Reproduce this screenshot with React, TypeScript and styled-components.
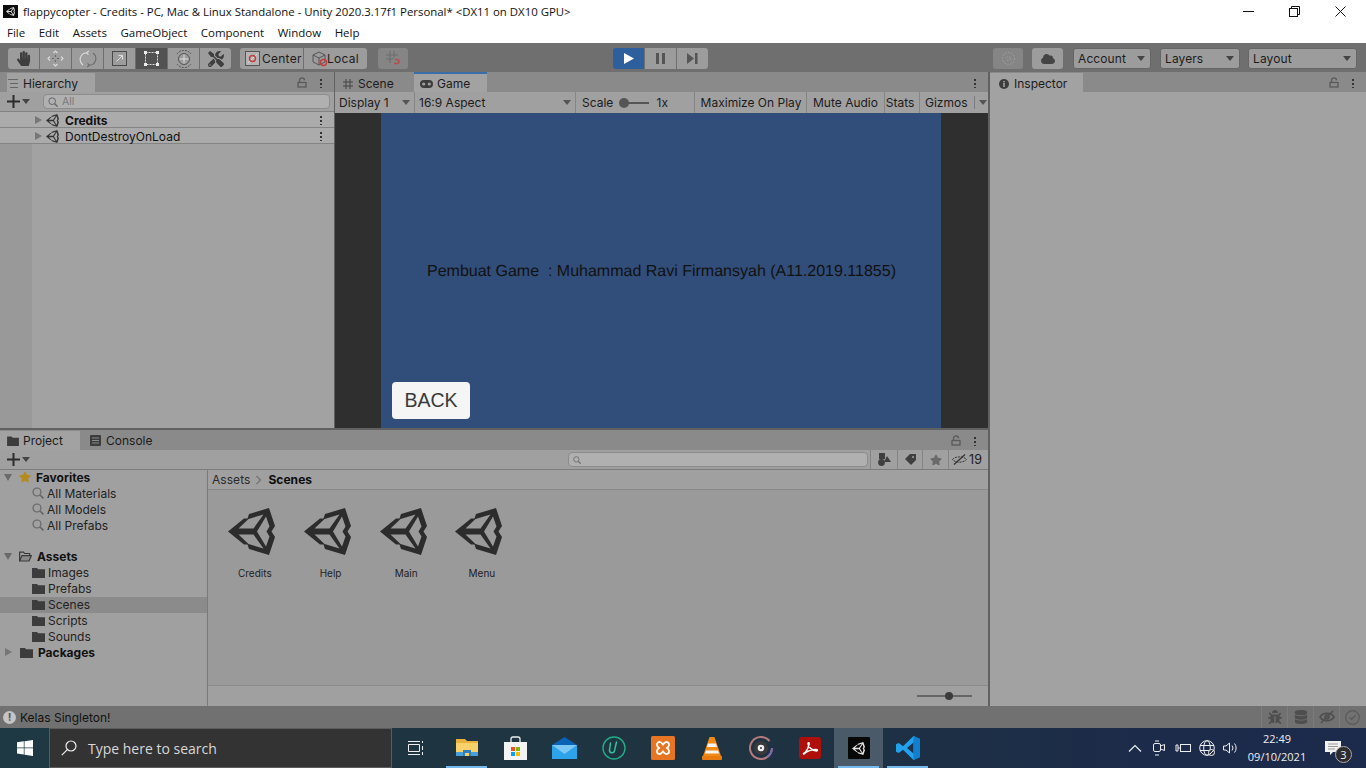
import React from "react";
import styled, { createGlobalStyle } from "styled-components";
import { FaHandPaper, FaTools, FaStar, FaCloud, FaBug, FaDatabase } from "react-icons/fa";

const Global = createGlobalStyle`
  html, body { margin: 0; padding: 0; width: 1366px; height: 768px; overflow: hidden; background: #fff; }
  * { box-sizing: border-box; }
`;

const Shell = styled.div`
  width: 1366px; height: 768px; display: flex; flex-direction: column;
  font-family: Inter, "Liberation Sans", sans-serif; font-size: 12px; color: #111; white-space: nowrap;
`;

/* window chrome */
const TitleBar = styled.div`
  height: 22px; display: flex; align-items: center; background: #fff; padding-left: 3px;
  font-family: "Open Sans", sans-serif; font-size: 11.4px; color: #111;
`;
const AppIcon = styled.div`
  width: 15px; height: 13px; background: #0c0c0c; color: #ddd; display: flex; align-items: center; justify-content: center; margin-right: 5px;
`;
const WinControls = styled.div`margin-left: auto; display: flex; padding-right: 3px;`;
const WinControl = styled.div`width: 46px; height: 22px; display: flex; align-items: center; justify-content: center;`;
const MenuBar = styled.div`
  height: 21px; display: flex; align-items: center; gap: 13.5px; padding-left: 7px; background: #fff;
  font-family: "Open Sans", sans-serif; font-size: 11.5px; color: #111;
`;

/* main toolbar */
const Toolbar = styled.div`height: 29px; background: #6f6f6f; display: flex; align-items: center; padding-top: 2px;`;
const ToolGroup = styled.div<{ $ml: number }>`
  display: flex; gap: 1px; margin-left: ${(p) => p.$ml}px; height: 21px; border-radius: 3px; overflow: hidden; flex: none;
`;
const ToolBtn = styled.div<{ $w?: number; $bg?: string }>`
  width: ${(p) => p.$w ?? 31}px; height: 21px; background: ${(p) => p.$bg ?? "#9c9c9c"};
  display: flex; align-items: center; justify-content: center; color: #1c1c1c;
`;
const PivotBtn = styled(ToolBtn)<{ $pl: number }>`
  justify-content: flex-start; padding-left: ${(p) => p.$pl}px; gap: 2px; font-size: 12px; letter-spacing: .25px;
`;
const Drop = styled.div<{ $ml: number; $w: number }>`
  margin-left: ${(p) => p.$ml}px; width: ${(p) => p.$w}px; height: 21px; background: #9c9c9c; border-radius: 3px; border: 1px solid #666; flex: none;
  display: flex; align-items: center; justify-content: space-between; padding: 0 5px 0 4px; font-size: 12px; letter-spacing: .1px; color: #1c1c1c;
`;
const Caret = styled.span<{ $c?: string }>`
  width: 0; height: 0; border-left: 4px solid transparent; border-right: 4px solid transparent; border-top: 5px solid ${(p) => p.$c ?? "#444"};
  flex: none;
`;

/* dock */
const Dock = styled.div`flex: 1; display: flex; gap: 2px; background: #616161; min-height: 0;`;
const LeftCol = styled.div`width: 988px; display: flex; flex-direction: column; gap: 2px; flex: none;`;
const TopRow = styled.div`height: 356px; display: flex; gap: 1px; flex: none;`;
const Panel = styled.div<{ $w?: number }>`
  ${(p) => (p.$w ? `width: ${p.$w}px;` : "flex: 1;")} display: flex; flex-direction: column; background: #a2a2a2; min-width: 0;
`;
const Strip = styled.div`height: 20px; flex: none; background: #8a8a8a; display: flex; align-items: flex-end;`;
const Tab = styled.div<{ $w: number; $ml?: number; $on?: boolean; $pl?: number; $gap?: number }>`
  width: ${(p) => p.$w}px; margin-left: ${(p) => p.$ml ?? 0}px; height: 19px; flex: none;
  background: ${(p) => (p.$on ? "#a2a2a2" : "#8a8a8a")}; display: flex; align-items: center; gap: ${(p) => p.$gap ?? 5}px; padding-left: ${(p) => p.$pl ?? 7}px;
  font-size: 12px; color: #1c1c1c;
`;
const TopTab = styled(Tab)`padding-top: 2px;`;
const ActiveTab = styled(Tab)`height: 20px; border-top: 2px solid #3a6ea8; padding-top: 1px;`;
const StripEnd = styled.div`margin-left: auto; height: 19px; display: flex; align-items: center; gap: 13px; color: #444; padding-right: 12px;`;
const Kebab = styled.div`
  width: 2px; height: 10px; flex: none;
  background: radial-gradient(circle, #333 1px, transparent 1.1px) 0 0 / 2px 4px repeat-y;
`;
const SubBar = styled.div`
  height: 20px; flex: none; background: #a0a0a0; border-bottom: 1px solid #828282; display: flex; align-items: center;
`;
const PlusBtn = styled.div`width: 34px; padding-left: 7px; display: flex; align-items: center; gap: 2px; flex: none;`;
const SearchField = styled.div<{ $ml?: number; $w: number }>`
  height: 15px; background: #b0b0b0; border: 1px solid #8c8c8c; border-radius: 4px; display: flex; align-items: center; gap: 4px; padding-left: 4px; flex: none;
  color: #7a7a7a; font-size: 10.5px; margin-left: ${(p) => p.$ml ?? 0}px; width: ${(p) => p.$w}px;
`;

/* hierarchy */
const HierBody = styled.div`flex: 1; display: flex; flex-direction: column;
  background: linear-gradient(90deg, #999 32px, #a2a2a2 32px);`;
const SceneRow = styled.div<{ $bold?: boolean }>`
  height: 16px; flex: none; background: #ababab; border-bottom: 1px solid #848484; display: flex; align-items: center; padding: 1px 12px 0 35px;
  font-size: 12px; font-weight: ${(p) => (p.$bold ? 700 : 400)}; color: #111; gap: 4px;
`;
const RowEnd = styled.span`margin-left: auto; display: flex;`;
const SceneLogo = styled.span`margin-right: 2px; color: #333; display: flex;`;
const RightTri = styled.span`
  width: 0; height: 0; border-top: 4px solid transparent; border-bottom: 4px solid transparent; border-left: 7px solid #767676; flex: none;
`;
const DownTri = styled.span`
  width: 0; height: 0; border-left: 4.5px solid transparent; border-right: 4.5px solid transparent; border-top: 7px solid #6a6a6a; flex: none;
`;

/* game */
const GameBar = styled(SubBar)`border-bottom: 0; height: 21px; font-size: 12px; color: #1c1c1c;`;
const GameCell = styled.div<{ $w: number; $end?: boolean }>`
  width: ${(p) => p.$w}px; height: 100%; display: flex; align-items: center; padding: 0 4px; flex: none;
  justify-content: space-between; border-right: ${(p) => (p.$end ? "0" : "1px solid #858585")};
`;
const CenterCell = styled(GameCell)<{ $shift: number }>`
  justify-content: center; padding: 0 ${(p) => (p.$shift < 0 ? -p.$shift : 0)}px 0 ${(p) => (p.$shift > 0 ? p.$shift : 0)}px;
`;
const ScaleCell = styled(GameCell)`padding: 0 26px 0 6px;`;
const GizmoCell = styled(GameCell)`justify-content: flex-start; padding: 0 0 0 5px;`;
const GizSep = styled.span`width: 1px; height: 13px; background: #7d7d7d; margin: 0 4px 0 6px; flex: none;`;
const ScaleTrack = styled.span`width: 30px; height: 10px; position: relative; display: inline-block; margin-left: 6px; vertical-align: -1px;
  &::before { content: ""; position: absolute; left: 3px; right: 0; top: 4px; height: 2px; background: #555; }
  &::after { content: ""; position: absolute; left: 0; top: 0; width: 10px; height: 10px; border-radius: 50%; background: #555; }
`;
const GameView = styled.div`flex: 1; background: #2f2f2f; display: flex; justify-content: center; min-height: 0;`;
const Screen = styled.div`
  width: 560px; margin-right: 1px; background: #314d79; display: flex; flex-direction: column; padding: 150px 0 9px 11px;
  font-family: "Liberation Sans", Arial, sans-serif;
`;
const Credit = styled.div`font-size: 16px; color: #111; margin-left: 35px; white-space: pre; height: 18px; line-height: 18px; text-rendering: geometricPrecision;`;
const BackBtn = styled.div`
  margin-top: auto; width: 78px; height: 37px; background: #f5f5f5; border-radius: 4px; color: #3a3a3a; font-size: 19.5px;
  display: flex; align-items: center; justify-content: center;
`;

/* project */
const BottomRow = styled.div`flex: 1; display: flex; flex-direction: column; background: #a2a2a2; min-height: 0;`;
const ProjectBar = styled(SubBar)`border-bottom: 1px solid #7c7c7c;`;
const FilterCell = styled.div<{ $w: number; $ml?: number }>`
  width: ${(p) => p.$w}px; margin-left: ${(p) => p.$ml ?? 0}px; height: 100%; display: flex; align-items: center; justify-content: center; gap: 2px; border-left: 1px solid #858585; flex: none; color: #1c1c1c; font-size: 12.5px;
`;
const Browser = styled.div`flex: 1; display: flex; min-height: 0;`;
const Tree = styled.div`width: 208px; border-right: 1px solid #7a7a7a; flex: none; background: #a0a0a0;`;
const TreeRow = styled.div<{ $indent: number; $bold?: boolean; $sel?: boolean }>`
  height: 16px; display: flex; align-items: center; padding: 0 0 2px ${(p) => p.$indent}px; gap: 3px; font-size: 12px;
  font-weight: ${(p) => (p.$bold ? 700 : 400)}; color: ${(p) => (p.$bold ? "#111" : "#222")}; background: ${(p) => (p.$sel ? "#8b8b8b" : "transparent")};
`;
const TreeGap = styled.div`height: 15px;`;
const TreeIcon = styled.span<{ $l: number }>`margin-left: ${(p) => p.$l}px; margin-right: 2px; display: flex; color: #b58a1e; font-size: 12px;`;
const Content = styled.div`flex: 1; display: flex; flex-direction: column; min-width: 0;`;
const Crumbs = styled.div`
  height: 20px; flex: none; background: #a0a0a0; border-bottom: 1px solid #8a8a8a; display: flex; align-items: center; padding-left: 4px; gap: 5px; font-size: 12px; letter-spacing: .05px; color: #2a2a2a;
`;
const CrumbBold = styled.b`color: #0d0d0d;`;
const AssetGrid = styled.div`flex: 1; display: flex; padding: 15px 0 0 9px; background: #9a9a9a;`;
const Asset = styled.div`width: 75.7px; flex: none; display: flex; flex-direction: column; align-items: center; gap: 10px; font-size: 10px; color: #222;`;
const AssetIcon = styled.div`height: 52px; color: #2c2c2c; display: flex; align-items: center; justify-content: center; margin-right: 6px;`;
const BrowserFoot = styled.div`
  height: 21px; flex: none; background: #a0a0a0; border-top: 1px solid #8a8a8a; display: flex; align-items: center; justify-content: flex-end; padding-right: 16px;
`;
const Slider = styled.div`width: 55px; height: 2px; background: #666; position: relative;
  &::after { content: ""; position: absolute; left: 28px; top: -3px; width: 8px; height: 8px; border-radius: 50%; background: #3c3c3c; }
`;

/* status */
const Status = styled.div`
  height: 22px; background: #717171; display: flex; align-items: center; padding-left: 3px; gap: 4px; font-size: 12px; color: #111;
`;
const StatusInfo = styled.div`
  width: 13px; height: 13px; border-radius: 50%; background: #c4c4c4; color: #555; font-size: 11px; font-weight: 700; display: flex; align-items: center; justify-content: center;
`;
const StatusIcons = styled.div`margin-left: auto; height: 100%; display: flex; padding-right: 1px;`;
const StatusCell = styled.div`
  width: 26px; height: 100%; display: flex; align-items: center; justify-content: center; border-left: 1px solid #7c7c7c; color: #4e4e4e; font-size: 14px;
`;

/* taskbar */
const Taskbar = styled.div`
  height: 40px; display: flex; align-items: stretch; background: linear-gradient(90deg, #1e3844 0%, #1f3440 50%, #1c2b4a 85%, #1c2a4b 100%); color: #fff;
`;
const StartBtn = styled.div`width: 49px; display: flex; align-items: center; justify-content: center; flex: none;`;
const SearchBox = styled.div`
  width: 343px; flex: none; background: #333; border: 1px solid #5c5c5c; display: flex; align-items: center; gap: 11px; padding-left: 11px;
  font-family: "Open Sans", sans-serif; font-size: 14px; color: #d8d8d8;
`;
const TaskApps = styled.div`display: flex; flex: none; padding-left: 1px;`;
const TaskApp = styled.div<{ $on?: boolean; $line?: boolean }>`
  width: 49px; flex: none; position: relative; display: flex; align-items: center; justify-content: center;
  background: ${(p) => (p.$on ? "#4a5a68" : "transparent")};
  &::after { content: ""; display: ${(p) => (p.$line ? "block" : "none")}; position: absolute; left: 4px; right: 4px; bottom: 0; height: 2px; background: #76b9ed; }
`;
const UnityTile = styled.div`width: 22px; height: 22px; background: #080808; border-radius: 1px; color: #e6e6e6; display: flex; align-items: center; justify-content: center;`;
const Tray = styled.div`margin-left: auto; display: flex; align-items: center; flex: none;`;
const TrayItem = styled.div`width: 24px; display: flex; align-items: center; justify-content: center;`;
const Clock = styled.div`
  width: 68px; display: flex; flex-direction: column; align-items: center; font-family: "Open Sans", sans-serif; font-size: 11px; line-height: 18px; color: #eee;
`;
const Notify = styled.div`width: 44px; margin-right: 11px; position: relative; display: flex; align-items: center; justify-content: center; height: 100%;`;
const NotifyBadge = styled.span`
  position: absolute; left: 24px; top: 18px; width: 17px; height: 17px; border-radius: 50%; background: #2c2c2c; border: 1px solid #aaa; font: 11px "Open Sans", sans-serif; color: #eee; display: flex; align-items: center; justify-content: center;
`;

/* small icons */
const UnityLogo = ({ s }: { s: number }) => (
  <svg width={s} height={s} viewBox="0 0 47 47" fill="currentColor" fillRule="evenodd">
    <path d="M0 23.500L16 10.500H19.500L21 6L41 0L47 18L43.500 23.500L47 29L41 47L21 41L19.500 36.500H16Z
             M10.500 20.500H25.500L35.500 6.500L20.500 11Z
             M10.500 26.500H25.500L35.500 40.500L20.500 36Z
             M29 23.500L38 8.500L41.500 18.500L38.500 23.500L41.500 28.500L38 38.500Z" />
  </svg>
);
const Lock = () => (
  <svg width="10" height="11" viewBox="0 0 10 11" fill="none" stroke="#5a5a5a" strokeWidth="1.3"><rect x="1" y="5.5" width="8" height="4.5" /><path d="M2.5 5V3.2A2.5 2.3 0 0 1 7.5 3.2" /></svg>
);
const Plus = () => (
  <svg width="13" height="13" viewBox="0 0 13 13" stroke="#2c2c2c" strokeWidth="2"><path d="M6.5 0v13M0 6.5h13" /></svg>
);
const Mag = ({ s = 10, c = "#666" }: { s?: number; c?: string }) => (
  <svg width={s} height={s} viewBox="0 0 12 12" fill="none" stroke={c} strokeWidth="1.2"><circle cx="5" cy="5" r="4" /><path d="M8 8l3.5 3.5" strokeWidth="1.7" /></svg>
);
const Folder = ({ open }: { open?: boolean }) => (
  <svg width="13" height="11" viewBox="0 0 13 11">
    {open ? (
      <g fill="none" stroke="#3a3a3a" strokeWidth="1.2"><path d="M.6 10V1.2h4l1 1.3h5v2" /><path d="M.6 10l2.4-5.4h9.4L10 10z" fill="#8a8a8a" /></g>
    ) : (
      <path d="M0 1h5l1.2 1.3H13V11H0z" fill="#3c3c3c" />
    )}
  </svg>
);
const FolderTab = () => <svg width="12" height="10" viewBox="0 0 13 11"><path d="M0 .5h5l1.2 1.3H13V11H0z" fill="#3c3c3c" /></svg>;
const ListIcon = () => (
  <svg width="10" height="9" viewBox="0 0 10 9" stroke="#666" strokeWidth="1"><path d="M0 .5h10M2 4.5h8M2 8.500h8" /></svg>
);
const HashIcon = () => (
  <svg width="10" height="10" viewBox="0 0 10 10" stroke="#444" strokeWidth="1"><path d="M3 0v10M7 0v10M0 3h10M0 7h10" /></svg>
);
const PadIcon = () => (
  <svg width="13" height="8" viewBox="0 0 13 8"><rect x="0" y="0" width="13" height="8" rx="4" fill="#3c3c3c" /><circle cx="3.7" cy="4" r="1.6" fill="#a2a2a2" /><circle cx="9.3" cy="4" r="1.6" fill="#a2a2a2" /></svg>
);
const ConsoleIcon = () => (
  <svg width="11" height="11" viewBox="0 0 11 11"><rect width="11" height="11" rx="1" fill="#3c3c3c" /><path d="M2 3h7M2 5.5h7M2 8h7" stroke="#8a8a8a" /></svg>
);
const InfoDot = () => (
  <svg width="10" height="10" viewBox="0 0 10 10"><circle cx="5" cy="5" r="5" fill="#3c3c3c" /><rect x="4.2" y="4" width="1.6" height="4" fill="#a2a2a2" /><rect x="4.2" y="2" width="1.6" height="1.4" fill="#a2a2a2" /></svg>
);
const MoveIcon = () => (
  <svg width="17" height="17" viewBox="0 0 17 17" fill="none" strokeWidth="1.1">
    <path d="M8.500 5v2M8.500 10v2M5 8.500h2M10 8.500h2" stroke="#6a6a6a" />
    <path d="M6.500 3l2-2 2 2M6.500 14l2 2 2-2M3 6.500l-2 2 2 2M14 6.500l2 2-2 2" stroke="#dcdcdc" />
  </svg>
);
const RotateIcon = () => (
  <svg width="18" height="18" viewBox="0 0 18 18" fill="none" strokeWidth="1.1">
    <path d="M4 15A6.800 6.800 0 0 1 7.500 2.700M9.800 1l-2.300 1.700 2 2" stroke="#dcdcdc" />
    <path d="M14 3A6.800 6.800 0 0 1 10.500 15.300M8.200 17l2.300-1.700-2-2" stroke="#6a6a6a" />
  </svg>
);
const ScaleIcon = () => (
  <svg width="15" height="15" viewBox="0 0 15 15" fill="none"><rect x=".5" y=".5" width="14" height="14" stroke="#4a4a4a" /><path d="M4.500 10.500l5.500-5.500M6.500 4.500h4v4" stroke="#e0e0e0" /></svg>
);
const RectIcon = () => (
  <svg width="15" height="15" viewBox="0 0 15 15" fill="none"><rect x="1.500" y="1.500" width="12" height="12" stroke="#ddd" strokeDasharray="2 1" /><g fill="#eee"><rect x="0" y="0" width="3" height="3" /><rect x="12" y="0" width="3" height="3" /><rect x="0" y="12" width="3" height="3" /><rect x="12" y="12" width="3" height="3" /></g></svg>
);
const TransformIcon = () => (
  <svg width="18" height="18" viewBox="0 0 18 18" fill="none" stroke="#555" strokeWidth="1"><circle cx="9" cy="9" r="5.500" /><path d="M9 4.500v9M4.500 9h9" stroke="#ddd" /><path d="M2 4A8.500 8.500 0 0 1 16 4M2 14a8.500 8.500 0 0 0 14 0" strokeDasharray="2 1" /></svg>
);
const CenterIcon = () => (
  <svg width="15" height="15" viewBox="0 0 15 15" fill="none"><rect x=".5" y=".5" width="14" height="14" stroke="#555" fill="#b5b5b5" /><path d="M3 12L12 3" stroke="#d8d8d8" /><circle cx="7.500" cy="7.500" r="3" stroke="#c83a3a" strokeWidth="1.400" /></svg>
);
const LocalSvg = styled.svg`margin-right: -4px; flex: none;`;
const LocalIcon = () => (
  <LocalSvg width="17" height="16" viewBox="0 0 17 16" fill="none" stroke="#555"><path d="M1 4l6-3 6 3v7l-6 3-6-3zM1 4l6 3 6-3M7 7v7" /><circle cx="11.500" cy="11.500" r="3" stroke="#c83a3a" strokeWidth="1.400" /></LocalSvg>
);
const SnapIcon = () => (
  <svg width="15" height="15" viewBox="0 0 15 15" fill="none" stroke="#6c6c6c"><path d="M4 0v12M8 0v7M0 4h12M0 8h7" /><path d="M8 12.500h3a2 2 0 0 0 0-4H9" stroke="#b25050" strokeWidth="1.500" /></svg>
);
const CollabIcon = () => (
  <svg width="15" height="15" viewBox="0 0 15 15" fill="none" stroke="#a2a2a2" strokeDasharray="1.500 1.500"><circle cx="7.500" cy="7.500" r="6" /><circle cx="7.500" cy="7.500" r="2" /></svg>
);
const Play = () => <svg width="10" height="11" viewBox="0 0 10 11"><path d="M0 0l10 5.500L0 11z" fill="#fff" /></svg>;
const Pause = () => <svg width="9" height="11" viewBox="0 0 9 11" fill="#555"><rect width="3" height="11" /><rect x="6" width="3" height="11" /></svg>;
const Step = () => <svg width="11" height="11" viewBox="0 0 11 11" fill="#555"><path d="M0 0l7 5.500L0 11z" /><rect x="8" width="2.500" height="11" /></svg>;
const Tag = () => <svg width="11" height="11" viewBox="0 0 11 11"><path d="M5 0h6v6l-5 5-6-6z" fill="#3f3f3f" /><circle cx="8" cy="3" r="1" fill="#a0a0a0" /></svg>;
const Shapes = () => <svg width="13" height="13" viewBox="0 0 13 13" fill="#3f3f3f"><rect x="1" y="0" width="6" height="6" /><circle cx="3.500" cy="9.500" r="3.400" /><path d="M9 3l4 6H6z" /></svg>;
const EyeOff = () => <svg width="15" height="11" viewBox="0 0 15 11" fill="none" stroke="#333"><path d="M.5 5.500C3 2 12 2 14.500 5.500 12 9 3 9 .5 5.500z" strokeDasharray="2 1" /><path d="M2 10.500L13 .5" strokeWidth="1.300" /></svg>;

const toolBtns = [
  <FaHandPaper key="h" size={15} color="#3f3f3f" />, <MoveIcon key="m" />, <RotateIcon key="r" />, <ScaleIcon key="s" />,
];
const assets = ["Credits", "Help", "Main", "Menu"];
const gameCells: { t: string; w: number; shift: number }[] = [
  { t: "Maximize On Play", w: 112, shift: 1 }, { t: "Mute Audio", w: 78, shift: 0 }, { t: "Stats", w: 35, shift: -4 },
];
const assetsTree = ["Images", "Prefabs", "Scenes", "Scripts", "Sounds"];

function SceneInner({ name }: { name: string }) {
  return (
    <>
      <RightTri />
      <SceneLogo><UnityLogo s={13} /></SceneLogo>
      {name}
      <RowEnd><Kebab /></RowEnd>
    </>
  );
}

export default function App() {
  return (
    <Shell>
      <Global />
      <TitleBar>
        <AppIcon><UnityLogo s={9} /></AppIcon>
        flappycopter - Credits - PC, Mac &amp; Linux Standalone - Unity 2020.3.17f1 Personal* &lt;DX11 on DX10 GPU&gt;
        <WinControls>
          <WinControl><svg width="11" height="1"><rect width="11" height="1" fill="#111" /></svg></WinControl>
          <WinControl><svg width="11" height="11" viewBox="0 0 11 11" fill="none" stroke="#111"><rect x=".5" y="2.500" width="8" height="8" /><path d="M2.500 2.500V.5h8v8H8.500" /></svg></WinControl>
          <WinControl><svg width="11" height="11" viewBox="0 0 11 11" stroke="#111"><path d="M.5.5l10 10M10.500.5l-10 10" /></svg></WinControl>
        </WinControls>
      </TitleBar>
      <MenuBar>
        {["File", "Edit", "Assets", "GameObject", "Component", "Window", "Help"].map((m) => <span key={m}>{m}</span>)}
      </MenuBar>
      <Toolbar>
        <ToolGroup $ml={8}>
          {toolBtns.map((b, i) => <ToolBtn key={i}>{b}</ToolBtn>)}
          <ToolBtn $bg="#525252"><RectIcon /></ToolBtn>
          <ToolBtn><TransformIcon /></ToolBtn>
          <ToolBtn><FaTools size={16} color="#3f3f3f" /></ToolBtn>
        </ToolGroup>
        <ToolGroup $ml={9}>
          <PivotBtn $w={63} $pl={5}><CenterIcon />Center</PivotBtn>
          <PivotBtn $w={63} $pl={8}><LocalIcon />Local</PivotBtn>
        </ToolGroup>
        <ToolGroup $ml={11}><ToolBtn $w={30} $bg="#858585"><SnapIcon /></ToolBtn></ToolGroup>
        <ToolGroup $ml={205}>
          <ToolBtn $w={31} $bg="#2d5f9c"><Play /></ToolBtn>
          <ToolBtn $w={31}><Pause /></ToolBtn>
          <ToolBtn $w={31}><Step /></ToolBtn>
        </ToolGroup>
        <ToolGroup $ml={285}><ToolBtn $w={30} $bg="#858585"><CollabIcon /></ToolBtn></ToolGroup>
        <ToolGroup $ml={9}><ToolBtn $w={31}><FaCloud size={14} color="#444" /></ToolBtn></ToolGroup>
        <Drop $ml={10} $w={78}>Account<Caret /></Drop>
        <Drop $ml={9} $w={80}>Layers<Caret /></Drop>
        <Drop $ml={8} $w={109}>Layout<Caret /></Drop>
      </Toolbar>
      <Dock>
        <LeftCol>
          <TopRow>
            <Panel $w={334}>
              <Strip>
                <TopTab $w={88} $ml={7} $on $pl={1}><ListIcon />Hierarchy</TopTab>
                <StripEnd><Lock /><Kebab /></StripEnd>
              </Strip>
              <SubBar>
                <PlusBtn><Plus /><Caret $c="#444" /></PlusBtn>
                <SearchField $ml={9} $w={287}><Mag />All</SearchField>
              </SubBar>
              <HierBody>
                <SceneRow $bold><SceneInner name="Credits" /></SceneRow>
                <SceneRow><SceneInner name="DontDestroyOnLoad" /></SceneRow>
              </HierBody>
            </Panel>
            <Panel>
              <Strip>
                <TopTab $w={78} $ml={1}><HashIcon />Scene</TopTab>
                <ActiveTab $w={73} $on $pl={6} $gap={4}><PadIcon />Game</ActiveTab>
                <StripEnd><Kebab /></StripEnd>
              </Strip>
              <GameBar>
                <GameCell $w={80}>Display 1<Caret $c="#555" /></GameCell>
                <GameCell $w={161}>16:9 Aspect<Caret $c="#555" /></GameCell>
                <ScaleCell $w={119}>
                  <span>Scale<ScaleTrack /></span><span>1x</span>
                </ScaleCell>
                {gameCells.map((c) => <CenterCell key={c.t} $w={c.w} $shift={c.shift}>{c.t}</CenterCell>)}
                <GizmoCell $w={68} $end>Gizmos<GizSep /><Caret $c="#555" /></GizmoCell>
              </GameBar>
              <GameView>
                <Screen>
                  <Credit>{"Pembuat Game  : Muhammad Ravi Firmansyah (A11.2019.11855)"}</Credit>
                  <BackBtn>BACK</BackBtn>
                </Screen>
              </GameView>
            </Panel>
          </TopRow>
          <BottomRow>
            <Strip>
              <Tab $w={80} $on $gap={4}><FolderTab />Project</Tab>
              <Tab $w={100} $ml={3}><ConsoleIcon />Console</Tab>
              <StripEnd><Lock /><Kebab /></StripEnd>
            </Strip>
            <ProjectBar>
              <PlusBtn><Plus /><Caret $c="#444" /></PlusBtn>
              <SearchField $ml={534} $w={300}><Mag s={8} /></SearchField>
              <FilterCell $w={27} $ml={2}><Shapes /></FilterCell>
              <FilterCell $w={25}><Tag /></FilterCell>
              <FilterCell $w={26}><FaStar size={12} color="#6a6a6a" /></FilterCell>
              <FilterCell $w={37}><EyeOff />19</FilterCell>
            </ProjectBar>
            <Browser>
              <Tree>
                <TreeRow $indent={4} $bold><DownTri /><TreeIcon $l={4}><FaStar /></TreeIcon>Favorites</TreeRow>
                {["All Materials", "All Models", "All Prefabs"].map((t) => (
                  <TreeRow key={t} $indent={32}><Mag s={12} />{t}</TreeRow>
                ))}
                <TreeGap />
                <TreeRow $indent={4} $bold><DownTri /><TreeIcon $l={4}><Folder open /></TreeIcon>Assets</TreeRow>
                {assetsTree.map((t) => (
                  <TreeRow key={t} $indent={32} $sel={t === "Scenes"}><Folder />{t}</TreeRow>
                ))}
                <TreeRow $indent={5} $bold><RightTri /><TreeIcon $l={5}><Folder /></TreeIcon>Packages</TreeRow>
              </Tree>
              <Content>
                <Crumbs>Assets<svg width="8" height="10" viewBox="0 0 8 10" fill="none" stroke="#777" strokeWidth="1.500"><path d="M1.500 1l4 4-4 4" /></svg><CrumbBold>Scenes</CrumbBold></Crumbs>
                <AssetGrid>
                  {assets.map((a) => (
                    <Asset key={a}><AssetIcon><UnityLogo s={47} /></AssetIcon>{a}</Asset>
                  ))}
                </AssetGrid>
                <BrowserFoot><Slider /></BrowserFoot>
              </Content>
            </Browser>
          </BottomRow>
        </LeftCol>
        <Panel $w={376}>
          <Strip>
            <TopTab $w={93} $on $pl={9}><InfoDot />Inspector</TopTab>
            <StripEnd><Lock /><Kebab /></StripEnd>
          </Strip>
        </Panel>
      </Dock>
      <Status>
        <StatusInfo>!</StatusInfo>Kelas Singleton!
        <StatusIcons>
          <StatusCell><FaBug /></StatusCell>
          <StatusCell><FaDatabase /></StatusCell>
          <StatusCell><svg width="16" height="16" viewBox="0 0 16 16" fill="none" stroke="#4e4e4e" strokeWidth="1.500"><path d="M1 8c3-5 11-5 14 0-3 5-11 5-14 0z" /><circle cx="8" cy="8" r="2" /><path d="M2 14L14 2" /></svg></StatusCell>
          <StatusCell><svg width="15" height="15" viewBox="0 0 15 15" fill="none" stroke="#5a5a5a" strokeWidth="1.200"><circle cx="7.500" cy="7.500" r="6.800" /><path d="M4.500 7.500l2 2 4-4" /></svg></StatusCell>
        </StatusIcons>
      </Status>
      <Taskbar>
        <StartBtn>
          <svg width="16" height="16" viewBox="0 0 16 16" fill="#fff"><path d="M0 2.300l6.800-1v6.200H0zM7.500 1.200L16 0v7.500H7.500zM0 8.200h6.800v6.300L0 13.500zM7.500 8.200H16V16l-8.500-1.200z" /></svg>
        </StartBtn>
        <SearchBox>
          <svg width="16" height="16" viewBox="0 0 16 16" fill="none" stroke="#eee" strokeWidth="1.200"><circle cx="10" cy="6" r="5" /><path d="M6.300 9.700L.8 15.200" /></svg>
          Type here to search
        </SearchBox>
        <TaskApps>
          <TaskApp>
            <svg width="19" height="16" viewBox="0 0 19 16" fill="none" stroke="#eee"><path d="M0 1.500h12M0 14.500h12M.5 4.500h11v7H.5zM14.500 1v2M14.500 6v4M14.500 12v3" /></svg>
          </TaskApp>
          <TaskApp $line>
            <svg width="22" height="20" viewBox="0 0 22 20"><path d="M0 1h9l2 2h11v15H0z" fill="#e8b23c" /><rect y="5" width="22" height="13" fill="#f7d26a" /><rect x="0" y="14" width="22" height="4" fill="#4a9fd8" /><rect x="7" y="12" width="8" height="6" fill="#2f7fbd" /><rect x="9" y="15" width="4" height="3" fill="#f7d26a" /></svg>
          </TaskApp>
          <TaskApp>
            <svg width="23" height="24" viewBox="0 0 23 24"><path d="M7 6V3a2 2 0 0 1 2-2h5a2 2 0 0 1 2 2v3" fill="none" stroke="#eee" strokeWidth="1.300" /><rect y="6" width="23" height="18" fill="#f4f4f4" /><rect x="7" y="11" width="4" height="4" fill="#f25022" /><rect x="12" y="11" width="4" height="4" fill="#7fba00" /><rect x="7" y="16" width="4" height="4" fill="#00a4ef" /><rect x="12" y="16" width="4" height="4" fill="#ffb900" /></svg>
          </TaskApp>
          <TaskApp>
            <svg width="25" height="22" viewBox="0 0 25 22"><path d="M0 8L12.500 0 25 8z" fill="#0a63b5" /><rect y="8" width="25" height="14" fill="#2da3ea" /><path d="M0 8l12.500 9L25 8z" fill="#7cc8f5" /></svg>
          </TaskApp>
          <TaskApp>
            <svg width="24" height="24" viewBox="0 0 24 24" fill="none"><circle cx="12" cy="12" r="11" stroke="#1fae86" strokeWidth="1.400" /><path d="M8.500 7l-1 7a2.500 2.500 0 0 0 5 .5L14.500 6" stroke="#2dc69b" strokeWidth="1.500" strokeLinecap="round" /></svg>
          </TaskApp>
          <TaskApp>
            <svg width="24" height="24" viewBox="0 0 24 24"><rect width="24" height="24" rx="1.500" fill="#e77624" /><path d="M7 6.500c2-1.500 3.500 0 5 2 1.500-2 3-3.500 5-2 2 1.500 1 4-1 5.500 2 1.500 3 4 1 5.500s-3.500 0-5-2c-1.500 2-3 3.500-5 2s-1-4 1-5.500c-2-1.500-3-4-1-5.500z" fill="none" stroke="#fff" strokeWidth="1.800" /></svg>
          </TaskApp>
          <TaskApp>
            <svg width="20" height="23" viewBox="0 0 20 23"><path d="M7.500 0h5L19 19H1z" fill="#f08a12" /><path d="M6 6.500h8l1 3.500H5zM4 13.500h12l1 3H3z" fill="#f4f4f4" /><path d="M0 19h20v3a1 1 0 0 1-1 1H1a1 1 0 0 1-1-1z" fill="#e77b10" /></svg>
          </TaskApp>
          <TaskApp>
            <svg width="24" height="24" viewBox="0 0 24 24" fill="none"><path d="M20.500 5A11 11 0 1 0 23 12" stroke="#b27a7a" strokeWidth="2" /><path d="M23 12a11 11 0 0 1-5 9" stroke="#7a6ab5" strokeWidth="2" /><circle cx="12" cy="12" r="7" fill="#3a3a3a" /><circle cx="12" cy="12" r="3.300" fill="#f2f2f2" /><circle cx="12" cy="12" r="1" fill="#333" /></svg>
          </TaskApp>
          <TaskApp>
            <svg width="22" height="22" viewBox="0 0 22 22"><rect width="22" height="22" rx="3" fill="#ae0f0a" /><path d="M4 17c3-1.500 5-5 6.200-10 .3-1.500-1-2-1.200-.5-.3 3 4.500 7.500 8.500 7.500 1.500 0 1.200-1.500-.5-1.500-3.500 0-9.500 1.500-12 4.500z" fill="none" stroke="#fff" strokeWidth="1.400" /></svg>
          </TaskApp>
          <TaskApp $on $line>
            <UnityTile><UnityLogo s={13} /></UnityTile>
          </TaskApp>
          <TaskApp $line>
            <svg width="24" height="24" viewBox="0 0 24 24"><path d="M17.500 0L24 3v18l-6.500 3L7 13.800 2.800 17 0 15.700V8.300L2.800 7 7 10.200zm0 6.500L11 12l6.500 5.500z" fill="#22a2ed" /><path d="M17.500 0L24 3v18l-6.500 3z" fill="#0f7fcf" /></svg>
          </TaskApp>
        </TaskApps>
        <Tray>
          <TrayItem><svg width="14" height="8" viewBox="0 0 14 8" fill="none" stroke="#eee" strokeWidth="1.200"><path d="M1 7.500l6-6 6 6" /></svg></TrayItem>
          <TrayItem><svg width="12" height="16" viewBox="0 0 12 16" fill="none" stroke="#eee"><rect x=".5" y="3.500" width="7" height="8" rx="1.500" /><path d="M7.500 6l4-1.500v6L7.500 9M2 1h4M2 15h4" /></svg></TrayItem>
          <TrayItem><svg width="16" height="12" viewBox="0 0 16 12" fill="none" stroke="#eee"><rect x="5.500" y="2.500" width="10" height="7" /><path d="M5.500 6H3M3 3v6H1V3z" /></svg></TrayItem>
          <TrayItem><svg width="16" height="16" viewBox="0 0 16 16" fill="none" stroke="#eee"><circle cx="8" cy="8" r="7.300" /><ellipse cx="8" cy="8" rx="3.300" ry="7.300" /><path d="M1 5.500h14M1 10.500h14" /><circle cx="12.500" cy="12.500" r="3" fill="#2a2f45" /><path d="M10.500 14.500l4-4" /></svg></TrayItem>
          <TrayItem><svg width="16" height="12" viewBox="0 0 16 12" fill="none" stroke="#eee"><path d="M.5 4h2.500L6.500 1v10L3 8H.5zM9 3.500a4 4 0 0 1 0 5M11.500 1.500a7 7 0 0 1 0 9" /></svg></TrayItem>
          <Clock><span>22:49</span><span>09/10/2021</span></Clock>
          <Notify>
            <svg width="16" height="14" viewBox="0 0 16 14"><path d="M0 0h16v11H8l-3 3v-3H0z" fill="#f2f2f2" /><path d="M3 3h10M3 5.500h10M3 8h7" stroke="#999" /></svg>
            <NotifyBadge>3</NotifyBadge>
          </Notify>
        </Tray>
      </Taskbar>
    </Shell>
  );
}
